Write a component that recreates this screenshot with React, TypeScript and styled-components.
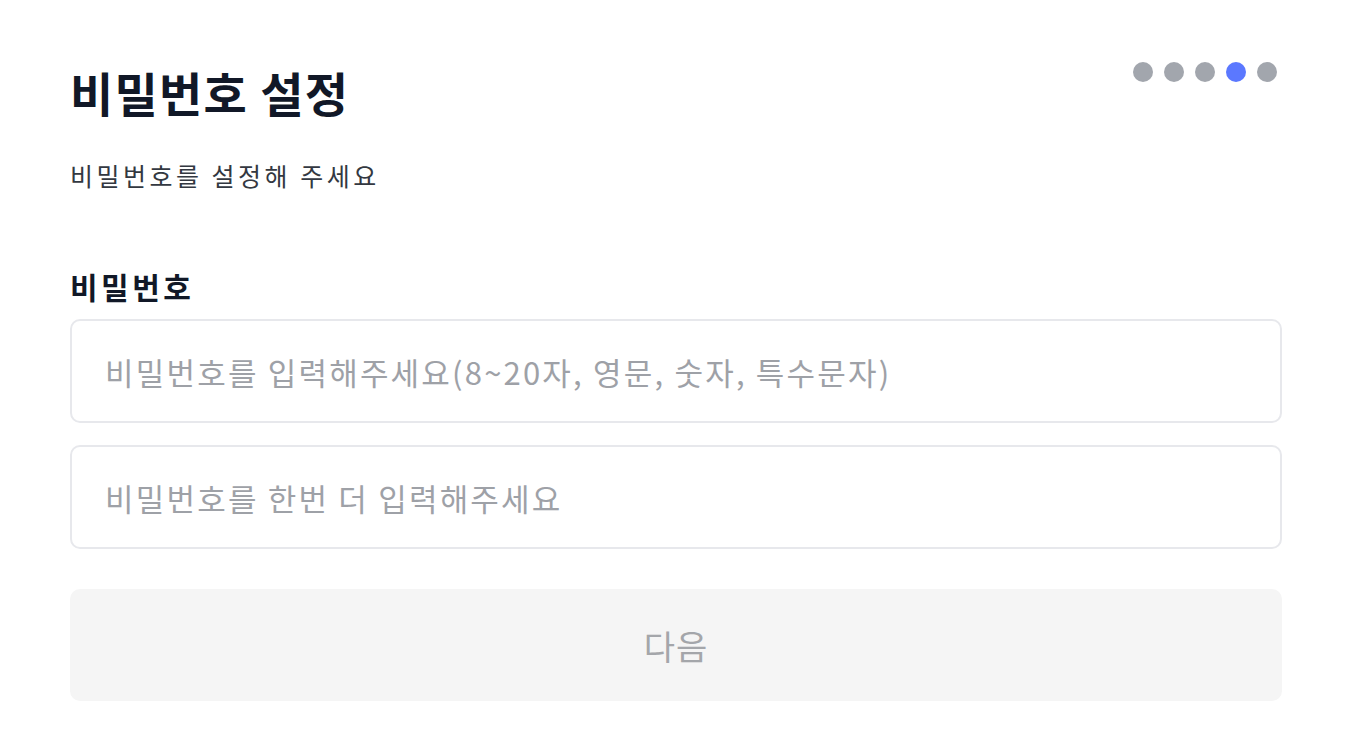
import styled, { createGlobalStyle } from "styled-components";

const GlobalStyle = createGlobalStyle`
  html, body {
    margin: 0;
    padding: 0;
    background: #ffffff;
    font-family: "Noto Sans CJK KR", "Noto Sans", sans-serif;
  }
`;

const Page = styled.div`
  width: 1212px;
  padding: 62px 0 0 70px;
`;

const Header = styled.div`
  display: flex;
  justify-content: space-between;
  align-items: flex-start;
`;

const Title = styled.h1`
  margin: 0;
  font-size: 47px;
  font-weight: 700;
  line-height: 60px;
  color: #111827;
  letter-spacing: 1.3px;
`;

const Steps = styled.div`
  display: flex;
  gap: 11px;
  padding: 0 5px 0 0;
`;

const Dot = styled.span<{ $active?: boolean }>`
  width: 20px;
  height: 20px;
  border-radius: 50%;
  background: ${(p) => (p.$active ? "#5b78ff" : "#a2a6ad")};
`;

const Subtitle = styled.p`
  margin: 37px 0 0;
  font-size: 25px;
  line-height: 32px;
  color: #333841;
  letter-spacing: 3.5px;
`;

const Label = styled.label`
  display: block;
  margin-top: 77px;
  font-size: 30px;
  font-weight: 700;
  line-height: 36px;
  color: #111827;
  letter-spacing: 3.5px;
`;

const Field = styled.input`
  display: block;
  box-sizing: border-box;
  width: 100%;
  height: 104px;
  margin-top: 15px;
  padding: 0 33px;
  border: 2px solid #e7e8ec;
  border-radius: 10px;
  font-family: inherit;
  font-size: 31px;
  letter-spacing: 2.2px;
  color: #111827;
  outline: none;
  & + & {
    margin-top: 22px;
  }
  &::placeholder {
    color: #9ea1a7;
  }
`;

const NextButton = styled.button`
  display: block;
  width: 100%;
  height: 112px;
  margin-top: 40px;
  border: none;
  border-radius: 10px;
  background: #f5f5f5;
  font-family: inherit;
  font-size: 34px;
  letter-spacing: 1px;
  color: #a4a6aa;
`;

export default function App() {
  return (
    <>
      <GlobalStyle />
      <Page>
        <Header>
          <Title>비밀번호 설정</Title>
          <Steps>
            {[0, 1, 2, 3, 4].map((i) => (
              <Dot key={i} $active={i === 3} />
            ))}
          </Steps>
        </Header>
        <Subtitle>비밀번호를 설정해 주세요</Subtitle>
        <Label>비밀번호</Label>
        <Field type="password" placeholder="비밀번호를 입력해주세요(8~20자, 영문, 숫자, 특수문자)" />
        <Field type="password" placeholder="비밀번호를 한번 더 입력해주세요" />
        <NextButton disabled>다음</NextButton>
      </Page>
    </>
  );
}
